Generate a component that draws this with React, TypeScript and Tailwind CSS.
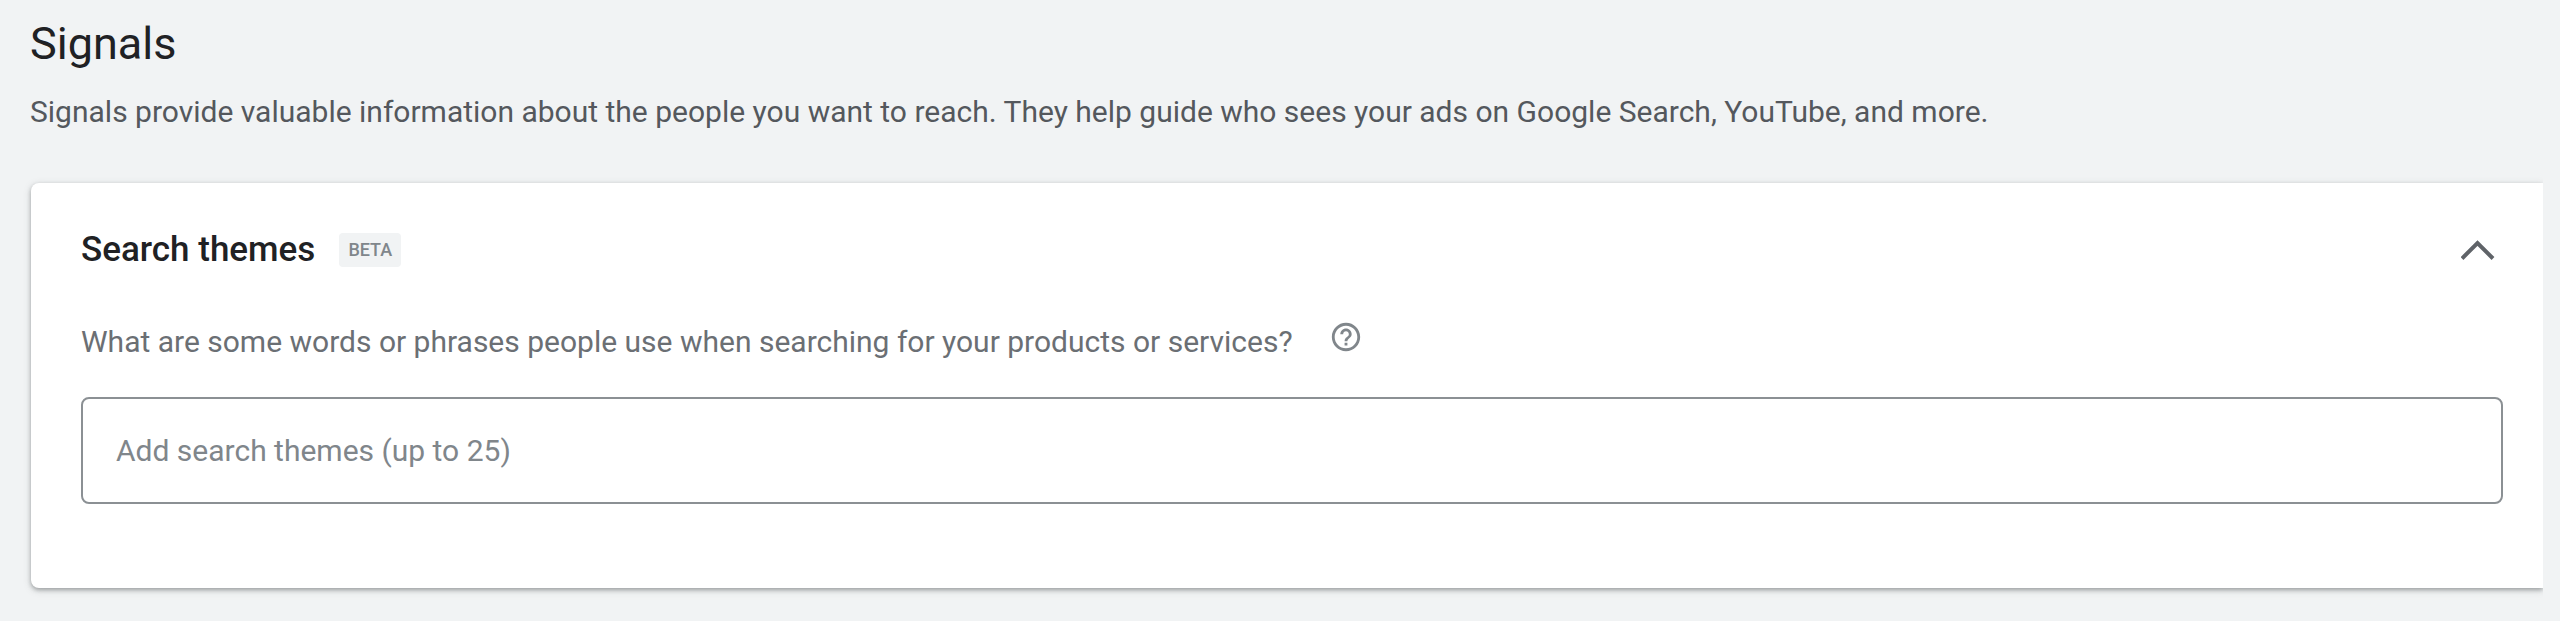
import { useState } from "react";
import { MdHelpOutline } from "react-icons/md";

export default function App() {
  const [open, setOpen] = useState(true);
  const [themes, setThemes] = useState("");

  return (
    <main className="min-h-screen bg-[#f1f3f4] pt-4 pr-[17px] font-[Roboto,sans-serif]">
      <header className="px-[30px]">
        <h1 className="text-[45px] leading-[56px] text-[#202124]">Signals</h1>
        <p className="mt-5 text-[30px] leading-10 text-[#54585d]">
          Signals provide valuable information about the people you want to reach. They help guide
          who sees your ads on Google Search, YouTube, and more.
        </p>
      </header>

      {/* the card runs into the right edge, so its shadow is cut off there */}
      <div className="overflow-hidden pt-[51px] pb-8 pl-[31px]">
        <section className="rounded-l-lg bg-white pt-[39px] pr-10 pb-[84px] pl-[50px] shadow-[0_2px_4px_rgba(60,64,67,0.4),0_2px_8px_rgba(60,64,67,0.15)]">
          <div className="flex items-center justify-between">
            <div className="flex items-center gap-6">
              <h2 className="text-[35px] leading-[56px] font-medium text-[#202124]">
                Search themes
              </h2>
              <span className="rounded bg-[#f1f3f4] px-[9px] text-[18px] leading-[34px] font-medium text-[#80868b]">
                BETA
              </span>
            </div>
            <button
              type="button"
              aria-label="Search themes"
              aria-expanded={open}
              onClick={() => setOpen(!open)}
              className="p-2"
            >
              <svg
                viewBox="0 0 34 22"
                className={open ? "h-[22px] w-[34px]" : "h-[22px] w-[34px] rotate-180"}
                fill="none"
                stroke="#5f6368"
                strokeWidth="4"
              >
                <path d="M1 19.5 16.5 4 32 19.5" />
              </svg>
            </button>
          </div>

          {open && (
            <div>
              <div className="mt-[42px] flex items-start gap-9">
                <label htmlFor="themes" className="text-[30px] leading-[44px] text-[#6b6f74]">
                  What are some words or phrases people use when searching for your products or
                  services?
                </label>
                <button type="button" aria-label="Help">
                  <MdHelpOutline className="size-[34px] text-[#80868b]" />
                </button>
              </div>
              <input
                id="themes"
                type="text"
                value={themes}
                onChange={(e) => setThemes(e.target.value)}
                placeholder="Add search themes (up to 25)"
                className="mt-[33px] h-[107px] w-full rounded-lg border-2 border-[#8b9094] px-[33px] text-[30px] text-[#202124] placeholder:text-[#80868b]"
              />
            </div>
          )}
        </section>
      </div>
    </main>
  );
}
